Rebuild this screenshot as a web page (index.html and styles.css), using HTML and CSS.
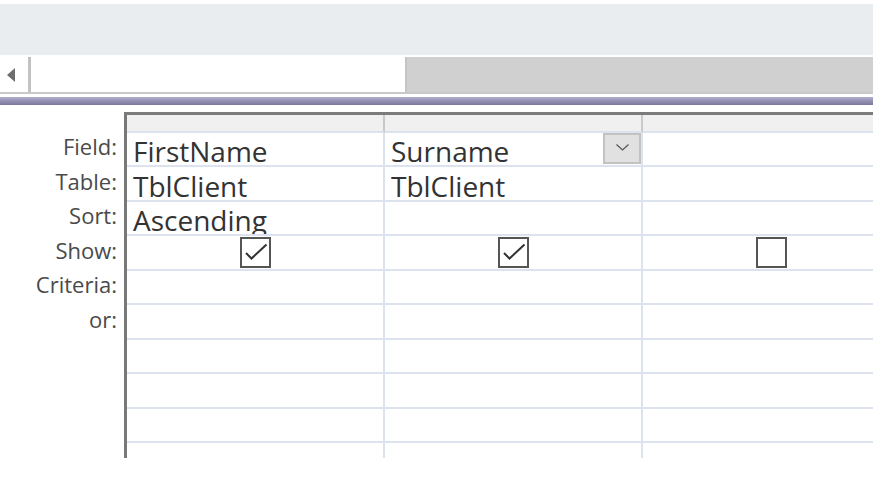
FILE: index.html
```html
<!DOCTYPE html>
<html lang="en">
<head>
  <meta charset="UTF-8" />
  <meta name="viewport" content="width=device-width, initial-scale=1.0" />
  <title>Query Design</title>
  <link rel="stylesheet" href="styles.css">
</head>
<body>
  <!-- ribbon strip -->
  <div class="ribbon"></div>

  <!-- table pane scrollbar -->
  <div class="scrollrow">
    <div class="scroll-arrow"><span class="tri"></span></div>
    <div class="scroll-thumb"></div>
    <div class="scroll-track"></div>
  </div>

  <div class="splitter"></div>

  <!-- design grid -->
  <div class="design">
    <div class="labels">
      <div class="label">Field:</div>
      <div class="label tall">Table:</div>
      <div class="label">Sort:</div>
      <div class="label tall">Show:</div>
      <div class="label">Criteria:</div>
      <div class="label tall">or:</div>
    </div>

    <div class="grid">
      <div class="hd"></div><div class="hd"></div><div class="hd"></div>

      <div class="cell">FirstName</div>
      <div class="cell">Surname
        <span class="drop"><svg width="13" height="7" viewBox="0 0 13 7"><path d="M0.5 0.5 L6.5 6 L12.5 0.5" fill="none" stroke="#555" stroke-width="1.2"/></svg></span>
      </div>
      <div class="cell"></div>

      <div class="cell tall">TblClient</div>
      <div class="cell tall">TblClient</div>
      <div class="cell tall"></div>

      <div class="cell clip">Ascending</div>
      <div class="cell"></div>
      <div class="cell"></div>

      <div class="cell tall mid"><span class="chk"><svg width="27" height="27" viewBox="0 0 27 27"><path d="M4 14 L9.5 19.5 L24.5 5.5" fill="none" stroke="#333" stroke-width="2"/></svg></span></div>
      <div class="cell tall mid"><span class="chk"><svg width="27" height="27" viewBox="0 0 27 27"><path d="M4 14 L9.5 19.5 L24.5 5.5" fill="none" stroke="#333" stroke-width="2"/></svg></span></div>
      <div class="cell tall mid"><span class="chk"></span></div>

      <div class="cell"></div><div class="cell"></div><div class="cell"></div>
      <div class="cell tall"></div><div class="cell tall"></div><div class="cell tall"></div>
      <div class="cell"></div><div class="cell"></div><div class="cell"></div>
      <div class="cell tall"></div><div class="cell tall"></div><div class="cell tall"></div>
      <div class="cell"></div><div class="cell"></div><div class="cell"></div>
      <div class="cell last"></div><div class="cell last"></div><div class="cell last"></div>
    </div>
  </div>
</body>
</html>
```

FILE: styles.css
```css
html, body { margin:0; padding:0; width:100%; height:100%; background:#fff; overflow:hidden; font-family:'Open Sans','Noto Sans',sans-serif; }

/* top strip */
.ribbon { margin-top:4px; height:51px; background:#e9edf0; }

/* scrollbar of table pane */
.scrollrow { display:flex; margin-top:2px; height:35px; border-bottom:2px solid #c9c9c9; }
.scroll-arrow { width:28px; display:flex; align-items:center; justify-content:center; border-right:3px solid #c2c2c2; background:#fff; }
.tri { width:0; height:0; border-top:7px solid transparent; border-bottom:7px solid transparent; border-right:8px solid #6e6e6e; margin-left:-6px; }
.scroll-thumb { width:374px; background:#fff; border-right:2px solid #c4c4c4; }
.scroll-track { flex:1; background:#d0d0d0; }

.splitter { margin-top:3px; height:8px; background:linear-gradient(#b3b0cc, #9692b4 45%, #7b779d); }

/* query design grid */
.design { display:flex; margin-top:7px; }
.labels { width:117px; padding-right:7px; padding-top:21px; flex-shrink:0; }
.label { height:34px; display:flex; align-items:flex-end; justify-content:flex-end; box-sizing:border-box; padding-bottom:9px; font-size:22px; line-height:1.1; color:#4a4a4a; }
.label.tall { height:35px; }

.grid { display:grid; grid-template-columns:258px 258px 258px; flex-shrink:0; border-top:3px solid #7b7b7b; border-left:3px solid #787878; }
.hd { height:18px; box-sizing:border-box; background:#f0f0f0; border-right:2px solid #c9c9c9; border-bottom:2px solid #dde3ee; }
.cell { position:relative; height:34px; box-sizing:border-box; border-right:2px solid #dde3ee; border-bottom:2px solid #dde3ee; padding-left:6px; display:flex; align-items:flex-end; font-size:28px; line-height:1; color:#333; white-space:nowrap; }
.cell.tall { height:35px; }
.cell.clip { overflow:hidden; }
.cell.last { height:15px; border-bottom:none; }
.cell.mid { align-items:center; justify-content:center; padding-left:0; }

.chk { width:31px; height:31px; box-sizing:border-box; border:2px solid #555; background:#fff; display:flex; align-items:center; justify-content:center; }
.chk svg { display:block; }

.drop { position:absolute; top:0; right:0; width:38px; height:31px; box-sizing:border-box; background:#e1e1e1; border:2px solid #c2c2c2; display:flex; align-items:center; justify-content:center; }
.drop svg { display:block; margin-top:-2px; }
```
